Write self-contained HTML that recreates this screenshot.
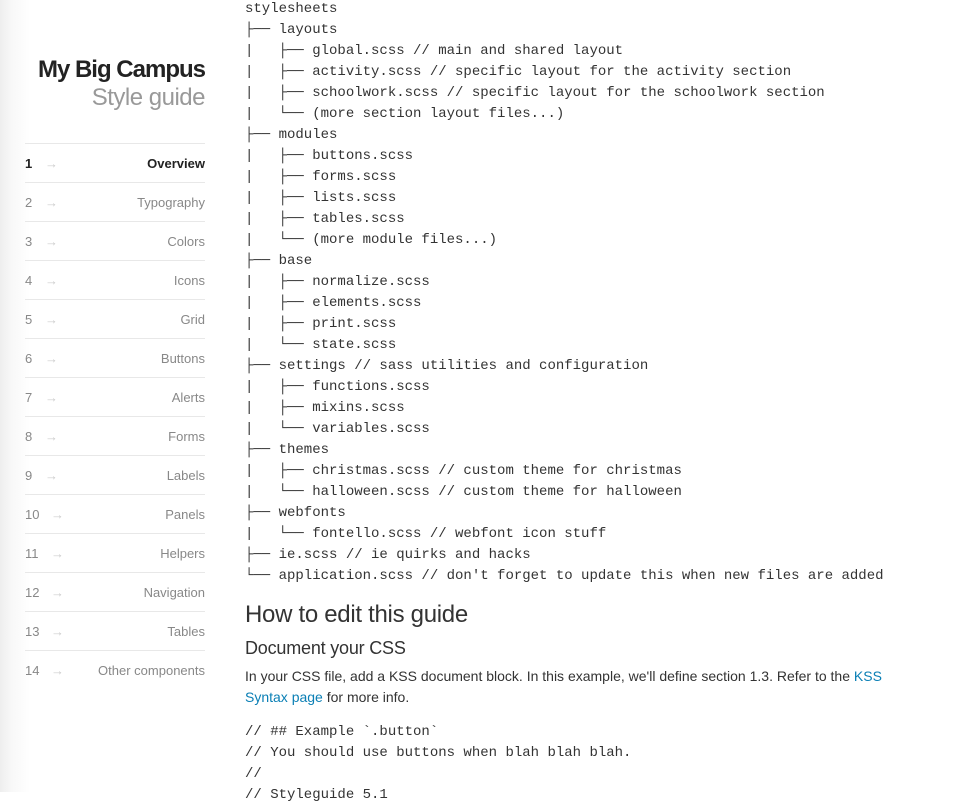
<!DOCTYPE html>
<html><head><meta charset="utf-8"><style>
*{margin:0;padding:0;box-sizing:border-box}
body{width:962px;height:792px;overflow:hidden;background:#fff;font-family:"Liberation Sans",sans-serif;color:#333;position:relative}
.side{position:absolute;left:0;top:0;width:230px;height:792px;background:linear-gradient(to right,#eee 0,#f8f8f8 12px,#fff 30px)}
.t1{position:absolute;right:757px;top:56px;font-size:24px;font-weight:bold;color:#222;letter-spacing:-1px;white-space:nowrap}
.t2{position:absolute;right:757px;top:84px;font-size:24px;color:#999;white-space:nowrap;letter-spacing:-0.5px}
.nav{position:absolute;left:25px;top:143px;width:180px;border-top:1px solid #e8e8e8}
.nav div{height:39px;border-bottom:1px solid #e8e8e8;display:flex;align-items:center;font-size:13px;color:#888}
.nav div span.n{width:20px}
.nav div span.a{color:#ccc;flex:1}
.nav div.on{color:#222;font-weight:bold}
.nav div:last-child{border-bottom:none}
pre{position:absolute;left:245px;font-family:"Liberation Mono",monospace;font-size:14px;line-height:21px;color:#333}
h2{position:absolute;left:245px;top:601px;font-size:24px;font-weight:normal;color:#333;letter-spacing:-0.3px}
h3{position:absolute;left:245px;top:638px;font-size:18px;font-weight:normal;color:#333;letter-spacing:-0.2px}
p{position:absolute;left:245px;top:666px;width:660px;font-size:14px;line-height:21px;color:#333}
a{color:#0a7fb5;text-decoration:none}
</style></head><body>
<div class="side"></div>
<div class="t1">My Big Campus</div>
<div class="t2">Style guide</div>
<div class="nav">
<div class="on"><span class="n">1</span><span class="a">→</span>Overview</div>
<div><span class="n">2</span><span class="a">→</span>Typography</div>
<div><span class="n">3</span><span class="a">→</span>Colors</div>
<div><span class="n">4</span><span class="a">→</span>Icons</div>
<div><span class="n">5</span><span class="a">→</span>Grid</div>
<div><span class="n">6</span><span class="a">→</span>Buttons</div>
<div><span class="n">7</span><span class="a">→</span>Alerts</div>
<div><span class="n">8</span><span class="a">→</span>Forms</div>
<div><span class="n">9</span><span class="a">→</span>Labels</div>
<div><span class="n" style="width:26px">10</span><span class="a">→</span>Panels</div>
<div><span class="n" style="width:26px">11</span><span class="a">→</span>Helpers</div>
<div><span class="n" style="width:26px">12</span><span class="a">→</span>Navigation</div>
<div><span class="n" style="width:26px">13</span><span class="a">→</span>Tables</div>
<div><span class="n" style="width:26px">14</span><span class="a">→</span>Other components</div>
</div>
<pre style="top:-1px">stylesheets
├── layouts
|   ├── global.scss // main and shared layout
|   ├── activity.scss // specific layout for the activity section
|   ├── schoolwork.scss // specific layout for the schoolwork section
|   └── (more section layout files...)
├── modules
|   ├── buttons.scss
|   ├── forms.scss
|   ├── lists.scss
|   ├── tables.scss
|   └── (more module files...)
├── base
|   ├── normalize.scss
|   ├── elements.scss
|   ├── print.scss
|   └── state.scss
├── settings // sass utilities and configuration
|   ├── functions.scss
|   ├── mixins.scss
|   └── variables.scss
├── themes
|   ├── christmas.scss // custom theme for christmas
|   └── halloween.scss // custom theme for halloween
├── webfonts
|   └── fontello.scss // webfont icon stuff
├── ie.scss // ie quirks and hacks
└── application.scss // don't forget to update this when new files are added</pre>
<h2>How to edit this guide</h2>
<h3>Document your CSS</h3>
<p>In your CSS file, add a KSS document block. In this example, we'll define section 1.3. Refer to the <a>KSS Syntax page</a> for more info.</p>
<pre style="top:722px">// ## Example `.button`
// You should use buttons when blah blah blah.
//
// Styleguide 5.1</pre>
</body></html>
